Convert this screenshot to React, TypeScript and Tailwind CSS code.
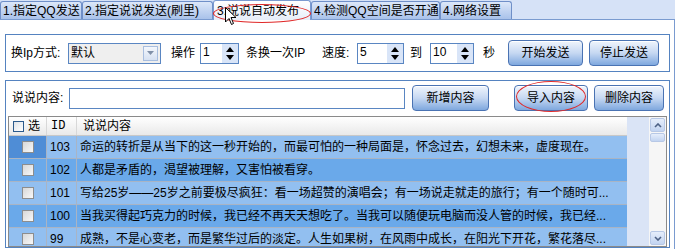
import React from "react";

const tabs = [
  { label: "1.指定QQ发送", w: "w-[82px]", active: false },
  { label: "2.指定说说发送(刷里)", w: "w-[131px]", active: false },
  { label: "3.说说自动发布", w: "w-[98px]", active: true },
  { label: "4.检测QQ空间是否开通", w: "w-[129px]", active: false },
  { label: "4.网络设置", w: "w-[72px]", active: false },
];

const rows = [
  {
    id: "103",
    text: "命运的转折是从当下的这一秒开始的，而最可怕的一种局面是，怀念过去，幻想未来，虚度现在。",
    bg: "bg-[#92bff0]",
    first: "bg-[#4f8dd6]",
  },
  {
    id: "102",
    text: "人都是矛盾的，渴望被理解，又害怕被看穿。",
    bg: "bg-[#6aa9ea]",
    first: "bg-[#6aa9ea]",
  },
  {
    id: "101",
    text: "写给25岁——25岁之前要极尽疯狂：看一场超赞的演唱会；有一场说走就走的旅行；有一个随时可...",
    bg: "bg-[#92bff0]",
    first: "bg-[#92bff0]",
  },
  {
    id: "100",
    text: "当我买得起巧克力的时候，我已经不再天天想吃了。当我可以随便玩电脑而没人管的时候，我已经...",
    bg: "bg-[#6aa9ea]",
    first: "bg-[#6aa9ea]",
  },
  {
    id: "99",
    text: "成熟，不是心变老，而是繁华过后的淡定。人生如果树，在风雨中成长，在阳光下开花，繁花落尽...",
    bg: "bg-[#92bff0]",
    first: "bg-[#92bff0]",
  },
];

function Btn({ children }: { children: React.ReactNode }) {
  return (
    <div className="h-[26px] flex items-center justify-center rounded-[4px] border border-[#4a73b3] bg-gradient-to-b from-[#f0f5fc] via-[#c6d8f2] to-[#7fa8de] text-[12px] shadow-[inset_0_1px_0_#ffffff]">
      {children}
    </div>
  );
}

function Spin({ value, w }: { value: string; w: string }) {
  return (
    <div className={`${w} h-[21px] border border-[#5a86c2] bg-white flex`}>
      <div className="flex-1 pl-[2px] leading-[17px] text-[12px]">{value}</div>
      <div className="w-[16px] bg-[#d9e5f8] flex flex-col items-center justify-center gap-[3px]">
        <svg width="8" height="5" viewBox="0 0 8 5">
          <polygon points="0,5 4,0 8,5" fill="#000" />
        </svg>
        <svg width="8" height="5" viewBox="0 0 8 5">
          <polygon points="0,0 8,0 4,5" fill="#000" />
        </svg>
      </div>
    </div>
  );
}

function Check({ header }: { header?: boolean }) {
  return header ? (
    <div className="w-[11px] h-[11px] border border-[#2b5a8c] bg-gradient-to-br from-[#dfe3e8] to-[#ffffff]" />
  ) : (
    <div className="w-[12px] h-[12px] border border-[#8d8d8d] bg-gradient-to-br from-[#d8d8d8] to-[#f8f8f8]" />
  );
}

export default function App() {
  return (
    <div className="w-[675px] h-[249px] relative overflow-hidden bg-white text-black text-[12px] font-['Liberation_Sans','Noto_Sans_CJK_SC',sans-serif]">
      {/* tab strip */}
      <div className="h-[20px] bg-[#d6e2f7] flex items-end border-b border-[#7a9bd0]">
        {tabs.map((t) =>
          t.active ? (
            <div
              key={t.label}
              className={`${t.w} h-[20px] -mb-px rounded-t-[3px] border border-b-0 border-[#7b9ad0] bg-gradient-to-b from-[#ffffff] to-[#e6edf8] flex items-center pl-[3px] whitespace-nowrap`}
            >
              {t.label}
            </div>
          ) : (
            <div
              key={t.label}
              className={`${t.w} h-[18px] rounded-t-[3px] border border-b-0 border-[#6f8fc8] bg-gradient-to-b from-[#dce7f9] to-[#a9c2ea] flex items-center pl-[2px] whitespace-nowrap`}
            >
              {t.label}
            </div>
          )
        )}
      </div>

      {/* content panel */}
      <div className="h-[229px] border-r border-[#7a9bd0] pl-[5px] pr-[4px] pt-[14px] flex flex-col gap-[8px]">
        {/* group 1 */}
        <div className="h-[38px] border border-[#5583c0] flex items-center pl-[5px]">
          <span className="w-[57px]">换Ip方式:</span>
          <div className="w-[93px] h-[21px] border border-[#5a86c2] bg-[#efefef] flex items-center">
            <span className="flex-1 pl-[2px]">默认</span>
            <div className="w-[15px] h-[15px] mr-[2px] border border-[#a8bedf] bg-gradient-to-b from-[#f4f7fc] to-[#d6e1f2] flex items-center justify-center">
              <svg width="7" height="4" viewBox="0 0 7 4">
                <polygon points="0,0 7,0 3.5,4" fill="#8090a8" />
              </svg>
            </div>
          </div>
          <span className="ml-[10px] w-[29px]">操作</span>
          <Spin value="1" w="w-[39px]" />
          <span className="ml-[7px] w-[76px]">条换一次IP</span>
          <span className="w-[35px]">速度:</span>
          <Spin value="5" w="w-[47px]" />
          <span className="ml-[6px] w-[20px]">到</span>
          <Spin value="10" w="w-[44px]" />
          <span className="ml-[9px] w-[25px]">秒</span>
          <div className="w-[75px]">
            <Btn>开始发送</Btn>
          </div>
          <div className="w-[70px] ml-[6px]">
            <Btn>停止发送</Btn>
          </div>
        </div>

        {/* group 2 */}
        <div className="h-[168px] border border-[#5583c0] flex flex-col pl-[2px] pr-[2px]">
          <div className="h-[35px] flex items-center pl-[4px] pb-[1px]">
            <span className="w-[57px]">说说内容:</span>
            <div className="w-[336px] h-[21px] border border-[#5a86c2] bg-white" />
            <div className="w-[77px] ml-[7px]">
              <Btn>新增内容</Btn>
            </div>
            <div className="w-[74px] ml-[25px]">
              <Btn>导入内容</Btn>
            </div>
            <div className="w-[70px] ml-[6px]">
              <Btn>删除内容</Btn>
            </div>
          </div>

          {/* table */}
          <div className="flex-1 border border-[#8a8a8a] flex overflow-hidden bg-[#dae4f6]">
            <div className="w-[618px] flex flex-col">
              <div className="h-[19px] flex bg-gradient-to-b from-[#ffffff] to-[#e9e9e9] border-b border-[#c8c8c8] shrink-0">
                <div className="w-[38px] flex items-center pl-[4px] gap-[4px] border-r border-[#d8d8d8]">
                  <Check header />
                  <span>选</span>
                </div>
                <div className="w-[30px] flex items-center pl-[4px] border-r border-[#d8d8d8] font-['Liberation_Mono','Noto_Sans_CJK_SC',monospace]">
                  ID
                </div>
                <div className="flex-1 flex items-center pl-[6px]">说说内容</div>
              </div>
              {rows.map((r) => (
                <div key={r.id} className={`h-[23px] shrink-0 flex border-b border-[#a9b4c4] ${r.bg}`}>
                  <div className={`w-[38px] flex items-center justify-center border-r border-[#a9b4c4] ${r.first}`}>
                    <Check />
                  </div>
                  <div className="w-[30px] flex items-center pl-[3px] border-r border-[#a9b4c4]">{r.id}</div>
                  <div className="flex-1 flex items-center pl-[3px] whitespace-nowrap overflow-hidden">{r.text}</div>
                </div>
              ))}
            </div>
            <div className="flex-1" />
            <div className="w-[17px] bg-[#f6f6f6] flex flex-col items-center pt-[1px]">
              <div className="w-[15px] h-[14px] rounded-[2px] border border-[#b7c8e6] bg-gradient-to-b from-[#e6eefb] to-[#c2d4f1] flex items-center justify-center">
                <svg width="8" height="5" viewBox="0 0 8 5">
                  <polyline points="1,4 4,1 7,4" fill="none" stroke="#4d6185" strokeWidth="1.6" />
                </svg>
              </div>
              <div className="w-[15px] h-[9px] mt-[1px] rounded-[2px] border border-[#b7c8e6] bg-gradient-to-b from-[#e6eefb] to-[#c2d4f1]" />
              <div className="flex-1" />
              <div className="w-[15px] h-[14px] mb-[1px] rounded-[2px] border border-[#b7c8e6] bg-gradient-to-b from-[#e6eefb] to-[#c2d4f1] flex items-center justify-center">
                <svg width="8" height="5" viewBox="0 0 8 5">
                  <polyline points="1,1 4,4 7,1" fill="none" stroke="#4d6185" strokeWidth="1.6" />
                </svg>
              </div>
            </div>
          </div>
        </div>
      </div>

      {/* red annotation ellipses */}
      <div className="absolute left-[213px] top-[4px] w-[98px] h-[19px] rounded-[50%] border border-[#e02828]" />
      <div className="absolute left-[516px] top-[81px] w-[70px] h-[31px] rounded-[50%] border border-[#e02828]" />

      {/* mouse cursor */}
      <svg className="absolute left-[225px] top-[7px]" width="12" height="19" viewBox="0 0 12 19">
        <polygon
          points="0.5,0.5 0.5,15 4,11.5 6.5,17.5 8.5,16.5 6,10.5 11,10.5"
          fill="#ffffff"
          stroke="#000000"
          strokeWidth="1"
        />
      </svg>
    </div>
  );
}
